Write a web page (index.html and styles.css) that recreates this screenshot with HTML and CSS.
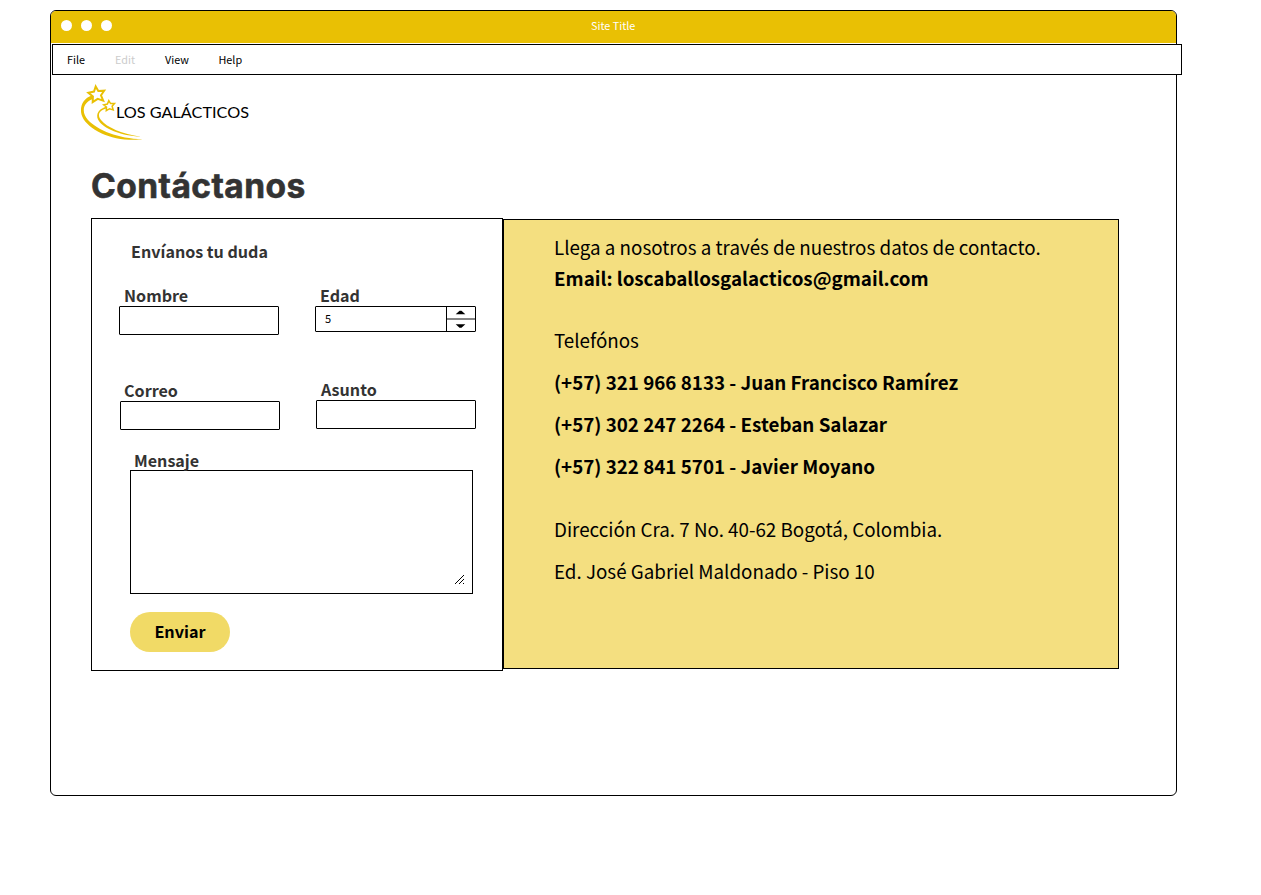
FILE: index.html
```html
<!DOCTYPE html>
<html lang="es">
<head>
<meta charset="utf-8">
<title>Los Galácticos - Contáctanos</title>
<link rel="stylesheet" href="styles.css">
</head>
<body>
<div class="window">
  <header class="titlebar">
    <div class="dots"><span class="dot"></span><span class="dot"></span><span class="dot"></span></div>
    <span class="title">Site Title</span>
  </header>
  <nav class="menu">
    <span class="m-file">File</span><span class="m-edit">Edit</span><span class="m-view">View</span><span>Help</span>
  </nav>
  <svg class="logo" width="180" height="60" viewBox="80 82 180 60">
    <g fill="#e9c004">
      <path d="M92 95.500C83 98 79.500 107 81.500 114.500C85 127 106 139 129 139.700C135 139.900 139 139.700 142.500 139.300C118 138.500 98 130.500 88 120C80 111 84 101 94.500 98.500Z"/>
      <path d="M107.500 106.500C99 108 95.500 114 98 119.500C103 129 121 135.600 141 136.700C122 134 107 127.500 101 120C96.500 114 99.500 109.500 108.500 107.900Z"/>
    </g>
    <g fill="#fff" stroke="#e9c004" stroke-linejoin="miter">
      <path stroke-width="2" d="M95.700 86.500L98.300 91L104.200 90.700L101 95.300L103.200 100.600L97.700 98.900L92.700 102.200L92.900 96.400L88.400 92.800L94 91.600Z"/>
      <path stroke-width="1.500" d="M108.800 100.600L110.600 103.600L114.500 103.600L112.100 106.300L113.200 109.900L109.600 108.700L106.300 110.700L106.500 107L103.700 104.800L107.400 104Z"/>
    </g>
    <text class="logo-text" x="116" y="118" textLength="133" lengthAdjust="spacingAndGlyphs">LOS GALÁCTICOS</text>
  </svg>
  <h1 class="heading">Contáctanos</h1>
  <main class="panels">
    <form class="form">
      <h2 class="subtitle">Envíanos tu duda</h2>
      <div class="row">
        <div class="field"><label class="label">Nombre</label><div class="input"></div></div>
        <div class="field edad"><label class="label">Edad</label>
          <div class="number"><span class="value">5</span>
            <svg width="29" height="24" viewBox="0 0 29 24"><path d="M0 12H29" stroke="#808080" stroke-width="2"/><path d="M9 7L13 3.500H15L19 7ZM9 17.500H19L15 21H13Z"/></svg>
          </div>
        </div>
      </div>
      <div class="row second">
        <div class="field correo"><label class="label">Correo</label><div class="input"></div></div>
        <div class="field asunto"><label class="label">Asunto</label><div class="input"></div></div>
      </div>
      <div class="message"><label class="label">Mensaje</label>
        <div class="area"><svg width="10" height="10" viewBox="0 0 10 10" shape-rendering="crispEdges"><path d="M.5 9.500L9.500 .5M4.500 9.500L9.500 4.500M8.500 9.500L9.500 8.500" stroke="#000" fill="none"/></svg></div>
      </div>
      <button class="send" type="button">Enviar</button>
    </form>
    <section class="info">
      <p>Llega a nosotros a través de nuestros datos de contacto.</p>
      <p class="strong">Email: loscaballosgalacticos@gmail.com</p>
      <p class="phones">Telefónos</p>
      <p class="strong spaced">(+57) 321 966 8133 - Juan Francisco Ramírez</p>
      <p class="strong spaced">(+57) 302 247 2264 - Esteban Salazar</p>
      <p class="strong spaced">(+57) 322 841 5701 - Javier Moyano</p>
      <p class="address">Dirección Cra. 7 No. 40-62 Bogotá, Colombia.</p>
      <p class="spaced">Ed. José Gabriel Maldonado - Piso 10</p>
    </section>
  </main>
</div>
</body>
</html>
```

FILE: styles.css
```css
* { box-sizing: border-box; }
body { margin: 0; padding: 10px 0 0 50px; background: #fff; color: #000; font-family: "Noto Sans CJK SC", "Noto Sans", sans-serif; }
h1, h2, p { margin: 0; }
.window { width: 1127px; height: 786px; border: 1px solid #000; border-radius: 6px; }
.titlebar { display: flex; align-items: center; height: 32px; background: #e9c004; border-radius: 5px 5px 0 0; padding-left: 10px; }
.dots { display: flex; gap: 9px; width: 530px; margin-top: -4px; }
.dot { width: 11px; height: 11px; border-radius: 50%; background: #fff; }
.title { color: #fff; font-size: 10.800px; line-height: 16px; margin-top: -4px; }
.menu { display: flex; align-items: center; width: 1130px; height: 31px; margin: 1px 0 0 1px; padding: 0 0 2px 14px; border: 1px solid #000; background: #fff; font-size: 10.800px; line-height: 16px; }
.m-file { width: 48px; }
.m-edit { width: 50px; color: #ccc; }
.m-view { width: 53.500px; }
.logo { display: block; margin: 7px 0 0 29px; }
.logo-text { font-family: Lato, sans-serif; font-size: 16px; }
.heading { margin: 19px 0 0 40px; height: 57px; font-family: Inter, sans-serif; font-size: 33.500px; letter-spacing: .45px; line-height: 51px; font-weight: 700; color: #333; -webkit-text-stroke: .6px #333; }
.panels { display: flex; align-items: flex-start; margin-left: 40px; }
.form { width: 412px; height: 453px; border: 1px solid #000; }
.subtitle { margin: 21px 0 0 39px; font-size: 16.100px; line-height: 22px; color: #333; }
.label { display: block; height: 21px; padding-left: 5px; font-size: 16.100px; line-height: 20px; font-weight: 700; color: #333; }
.row { display: flex; gap: 36px; margin: 23px 0 0 27px; }
.field { width: 160px; }
.edad { width: 161px; }
.input { height: 29px; border: 1px solid #000; border-radius: 1px; }
.number { display: flex; height: 26px; border: 1px solid #000; border-radius: 1px; }
.number svg { border-left: 1px solid #000; width: 29px; }
.value { flex: 1; padding-left: 9px; font-size: 11px; line-height: 23px; }
.second { margin: 44px 0 0 28px; }
.correo { padding-top: 1px; }
.correo .label { padding-left: 4px; }
.message { margin: 20px 0 0 38px; width: 343px; }
.message .label { height: 20px; padding-left: 4px; }
.area { display: flex; justify-content: flex-end; align-items: flex-end; height: 124px; border: 1px solid #000; padding: 0 8px 8px 0; }
.send { display: block; width: 100px; height: 40px; margin: 18px 0 0 38px; padding: 0 0 2px; border: 0; border-radius: 20px; background: #f1da66; color: #000; font: 700 16.200px/38px "Noto Sans CJK SC", sans-serif; }
.info { width: 616px; height: 450px; margin-top: 1px; padding: 11px 0 0 50px; border: 1px solid #000; background: #f4df80; font-size: 18.800px; line-height: 31px; white-space: nowrap; }
.strong { font-weight: 700; }
.phones { margin-top: 31px; }
.spaced { margin-top: 11px; }
.address { margin-top: 32px; }
```
